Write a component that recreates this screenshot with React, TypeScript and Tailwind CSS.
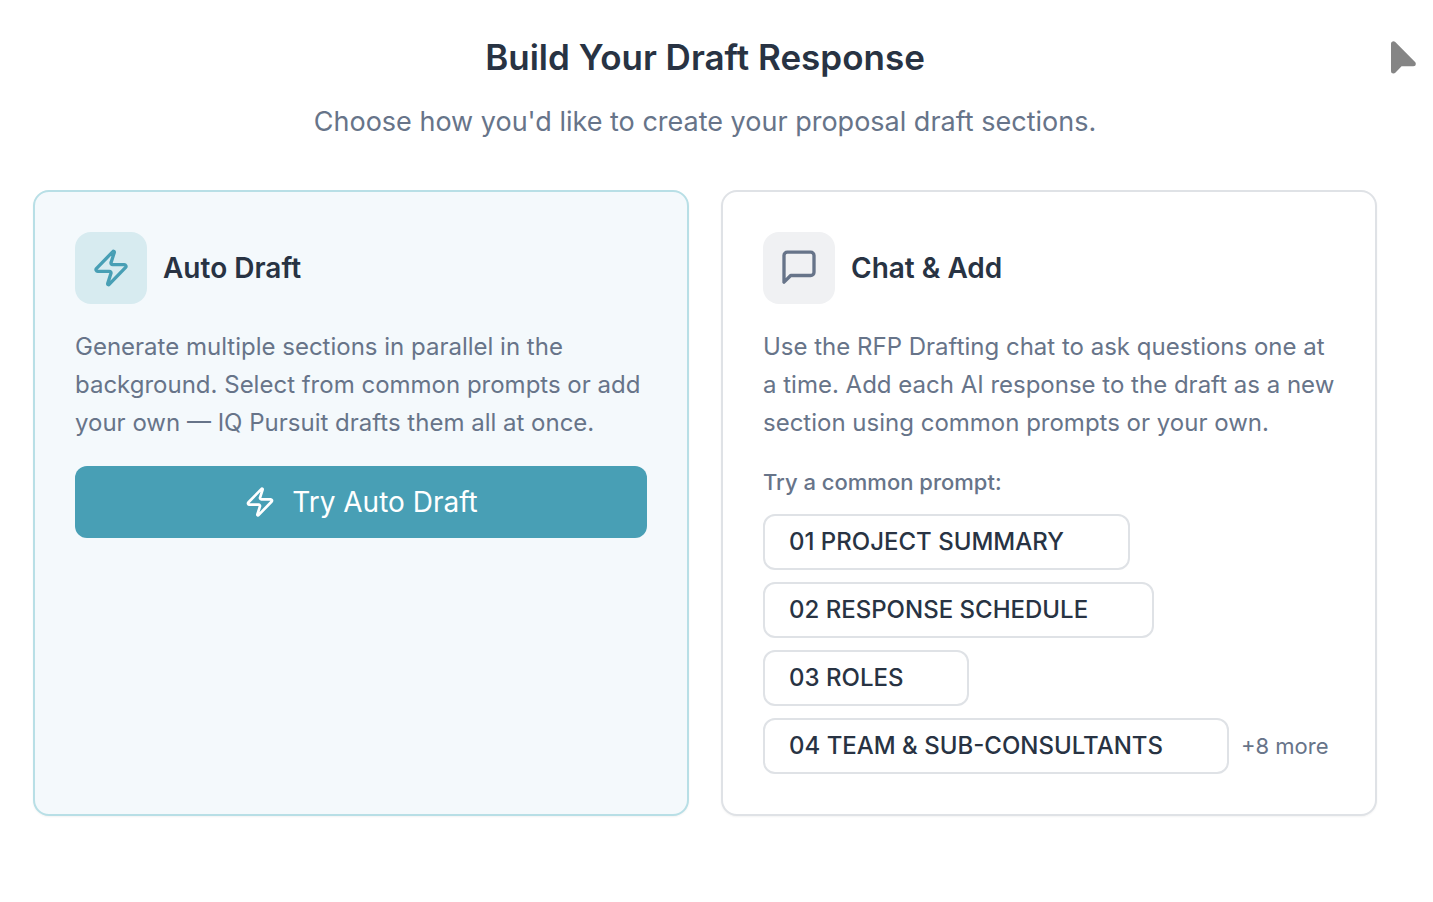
import React from 'react';
import { Zap } from 'lucide-react';

const prompts = [
  { label: '01 PROJECT SUMMARY' },
  { label: '02 RESPONSE SCHEDULE' },
  { label: '03 ROLES' },
  { label: '04 TEAM & SUB-CONSULTANTS' },
];

function Pointer() {
  return (
    <svg width="28" height="36" viewBox="0 0 28 36" className="absolute top-10 right-4" aria-hidden="true">
      <path d="M4.5 3.8 L4.5 31 L11.5 23.7 L24.3 23.7 Z" fill="#858585" stroke="#858585" strokeWidth="5" strokeLinejoin="round" />
    </svg>
  );
}

function ChatIcon() {
  return (
    <svg width="40" height="40" viewBox="0 0 24 24" fill="none" stroke="currentColor" strokeWidth="2" strokeLinecap="round" strokeLinejoin="round" aria-hidden="true">
      <path d="M21 14.5a2 2 0 0 1-2 2H7l-4 4V4.5a2 2 0 0 1 2-2h14a2 2 0 0 1 2 2z" />
    </svg>
  );
}

export default function App() {
  return (
    <div className="relative min-h-screen bg-white pt-9 pr-14 pb-20 pl-[33px] font-['Inter',sans-serif] text-[#283343]">
      <Pointer />
      <header className="text-center">
        <h1 className="text-[35px] leading-[42px] font-semibold">Build Your Draft Response</h1>
        <p className="mt-6 text-[27px] leading-10 text-[#677489]">
          Choose how you'd like to create your proposal draft sections.
        </p>
      </header>

      <main className="mt-12 grid grid-cols-2 gap-8">
        <section className="rounded-2xl border-2 border-[#b8dfe6] bg-[#f4f9fc] p-10 shadow-xs">
          <div className="flex items-center gap-4">
            <div className="flex size-18 items-center justify-center rounded-2xl bg-[#d7ebf0] text-[#489fb5]">
              <Zap size={40} />
            </div>
            <h2 className="text-[28px] font-semibold">Auto Draft</h2>
          </div>
          <p className="mt-6 text-[24px] leading-[38px] text-[#677489]">
            Generate multiple sections in parallel in the background. Select from common prompts or add your own — IQ Pursuit drafts them all at once.
          </p>
          <button className="mt-6 flex h-18 w-full items-center justify-center gap-4 rounded-xl bg-[#489fb5] text-[28px] text-white">
            <Zap size={32} />
            Try Auto Draft
          </button>
        </section>

        <section className="rounded-2xl border-2 border-[#dfe2e6] bg-white p-10 shadow-xs">
          <div className="flex items-center gap-4">
            <div className="flex size-18 items-center justify-center rounded-2xl bg-[#f0f1f3] text-[#677489]">
              <ChatIcon />
            </div>
            <h2 className="text-[28px] font-semibold">Chat &amp; Add</h2>
          </div>
          <p className="mt-6 text-[24px] leading-[38px] text-[#677489]">
            Use the RFP Drafting chat to ask questions one at a time. Add each AI response to the draft as a new section using common prompts or your own.
          </p>
          <p className="mt-6 text-[22px] leading-8 font-medium text-[#677489]">Try a common prompt:</p>
          <div className="mt-4 flex flex-wrap items-center gap-3">
            {prompts.map(prompt => (
              <button key={prompt.label} className="h-14 rounded-xl border-2 border-[#dfe2e6] pr-16 pl-6 text-[24px] font-medium">
                {prompt.label}
              </button>
            ))}
            <span className="text-[22px] text-[#677489]">+8 more</span>
          </div>
        </section>
      </main>
    </div>
  );
}
